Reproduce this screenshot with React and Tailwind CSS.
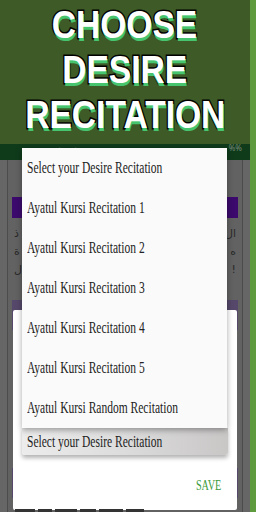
import React from "react";

const items = [
  "Select your Desire Recitation",
  "Ayatul Kursi Recitation 1",
  "Ayatul Kursi Recitation 2",
  "Ayatul Kursi Recitation 3",
  "Ayatul Kursi Recitation 4",
  "Ayatul Kursi Recitation 5",
  "Ayatul Kursi Random Recitation",
];

const arabicEdges = [
  ["ال", "ذ"],
  ["ه", "ة"],
  ["!", "ل"],
];

const serif = "font-['Liberation_Serif',serif]";

const Label = ({ children }) => (
  <span className={`inline-block origin-left scale-x-[0.72] whitespace-nowrap text-[16px] leading-none text-[#222] ${serif}`}>
    {children}
  </span>
);

const Title = ({ children }) => (
  <div className="h-[45px] flex items-center justify-center">
    <span className="inline-block scale-x-[0.86] font-['Liberation_Sans',sans-serif] font-bold text-[39px] leading-none text-white [-webkit-text-stroke:3px_#000] [paint-order:stroke_fill] [text-shadow:1px_3px_0_#46c46e]">
      {children}
    </span>
  </div>
);

export default function App() {
  return (
    <div className="relative w-[256px] h-[512px] overflow-hidden flex bg-[#5f5f5f]">
      <div className="w-[250px] flex flex-col">
        {/* banner */}
        <div className="h-[144px] bg-[#3d5a27] flex flex-col pt-[2px]">
          <Title>CHOOSE</Title>
          <Title>DESIRE</Title>
          <Title>RECITATION</Title>
        </div>

        {/* dimmed app bar */}
        <div className="h-[16px] bg-[#0f3b1b] flex items-start justify-between px-[50px] pr-[8px]">
          <span className="text-[6px] leading-[6px] tracking-[2px] text-[#6a7a6a]">‥ · ‥ · ‥</span>
          <span className="text-[8px] leading-[8px] text-[#7a8a7a]">%%</span>
        </div>

        {/* dimmed page content */}
        <div className="flex-1 flex">
          <div className="w-[7px] bg-[#666]" />
          <div className="w-[1px] bg-[#4c4c4c]" />
          <div className="flex-1 flex flex-col bg-[#626262] px-[4px] pt-[37px]">
            <div className="h-[21px] bg-[#3b0a6c]" />
            <div className="mt-[8px] flex flex-col gap-[2px] px-[2px] font-['DejaVu_Sans',sans-serif] text-[11px] leading-[16px] text-[#2a2a2a]">
              {arabicEdges.map(([l, r], i) => (
                <div key={i} className="flex justify-between">
                  <span dir="rtl">{r}</span>
                  <span dir="rtl">{l}</span>
                </div>
              ))}
            </div>
            <div className="mt-[22px] h-[30px] bg-[#55486a]" />
            <div className="mt-[138px] h-[30px] bg-[#55486a]" />
          </div>
          <div className="w-[1px] bg-[#4c4c4c]" />
          <div className="w-[7px] bg-[#666]" />
        </div>
      </div>
      <div className="w-[6px] bg-[#5d9b3e]" />

      {/* dialog */}
      <div className="absolute left-[13px] top-[310px] w-[224px] h-[200px] bg-white rounded-[2px] flex flex-col pt-[118px]">
        <div className="mx-[9px] h-[27px] flex items-center pl-[5px] rounded-b-[3px] bg-gradient-to-r from-[#ececec] via-[#dcdcdc] to-[#c9c6c6] shadow-[0_3px_4px_rgba(0,0,0,0.3)]">
          <Label>Select your Desire Recitation</Label>
        </div>
        <div className="mt-auto mb-[17px] flex justify-end pr-[16px]">
          <span className={`inline-block origin-right scale-x-[0.68] text-[15px] leading-none text-[#3a9a3a] ${serif}`}>SAVE</span>
        </div>
      </div>

      {/* dropdown menu */}
      <div className="absolute left-[22px] top-[148px] w-[205px] bg-[#fafafa] shadow-[0_2px_6px_rgba(0,0,0,0.35)] flex flex-col">
        {items.map((t) => (
          <div key={t} className="h-[40px] flex items-center pl-[5px]">
            <Label>{t}</Label>
          </div>
        ))}
      </div>

      {/* bottom peek of dimmed text */}
      <div className="absolute left-[13px] top-[509px] w-[224px] h-[3px] flex gap-[3px] px-[2px]">
        <div className="w-[20px] bg-[#333]" />
        <div className="w-[14px] bg-[#333]" />
        <div className="w-[22px] bg-[#333]" />
        <div className="w-[16px] bg-[#333]" />
        <div className="w-[24px] bg-[#333]" />
        <div className="w-[18px] bg-[#333]" />
      </div>
    </div>
  );
}
